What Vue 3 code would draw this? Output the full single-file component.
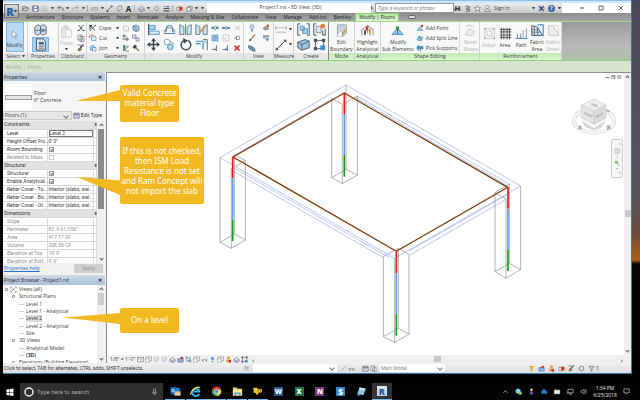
<script setup>
import { ref } from 'vue'

const c = { k: '#4a5058', b: '#3f8fc4', l: '#a9d3ee', g: '#c4c4c4' }
const s = (d, col = c.k, w = 1.6, fill = 'none') =>
  `<path d="${d}" fill="${fill}" stroke="${col}" stroke-width="${w}" stroke-linejoin="round"/>`
const f = (d, col) => `<path d="${d}" fill="${col}"/>`

const icons = {
  open: s('M1 13V3h5l1 2h6v3M1 13l3-6h11l-3 6z', '#666'),
  save: s('M2 2h11l1 1v11H2z', '#446', 1.6, '#8b9dba') + f('M5 2h6v5H5zM4 9h8v5H4z', '#e8eef5'),
  sync: s('M13 5A6 6 0 1 0 14 9M8 5v4h4', '#aaa'),
  undo: s('M6 2L2 6l4 4M2 6h8q5 0 4 7', '#4a4f58', 1.8),
  redo: s('M10 2l4 4-4 4M14 6H6Q1 6 2 13', '#999', 1.8),
  ruler: s('M1 6h14v5H1zM4 6v2M8 6v3M12 6v2', '#999'),
  line: s('M2 14L14 2', '#555', 1.6) + f('M1 12h4v4H1zM11 1h4v4h-4z', '#556'),
  tag: s('M6 14L3 8l3-6h6l2 6-4 4z', '#777'),
  home: s('M2 8l6-5 6 5v5l-6 2-6-2zM2 8l6 3 6-3M8 11v4', '#657', 1.3, '#dde6ef'),
  sect: s('M8 2l5 6-5 6-5-6z', '#777'),
  thin: f('M1 3h14v1H1zM1 7h14v2H1zM1 12h14v3H1z', '#555') + f('M9 2h4v4H9z', c.b),
  closew: s('M2 5h9v8H2z', '#777', 1.4, '#eee') + f('M7 4h8v8H7z', '#d0392b'),
  switchw: s('M2 6h9v8H2zM5 6V3h9v8h-3', '#666', 1.4, '#eee'),
  cursor: s('M4 1v12l3-3 2 5 2-1-2-5h4z', '#6a7680', 1, '#fff'),
  props: s('M3 1h8l3 3v11H3z', '#555', 1.2, '#dfe8f2') + f('M6 5h6v3H6z', '#2f5f94') + s('M6 10h6M6 12.500h6', '#555', 1),
  family: s('M1 5l4-3 3 2v9l-4 2-3-2zM8 4l4-2 3 2v9l-4 2-3-2zM1 9h14', '#667', 1.1, '#cfdbe8') + f('M8 7h5v4H8z', '#7a8ea8'),
  paste: s('M2 3h9v12H2zM5 1h4v3H5z', '#ccc', 1.1, '#e9e9e9') + s('M7 6h7v9H7z', '#ccc', 1, '#fafafa'),
  cut: s('M3 2l9 11M13 2L4 13', '#556', 1.8) + s('M1 13h4M11 13h4', '#556', 2.4),
  copy: s('M2 2h8v10H2zM6 5h8v10H6z', '#667', 1.3, '#fff') + s('M8 9h4M8 12h4', '#667', 1),
  match: s('M13 1L7 8', '#345', 2.4) + f('M3 8l5-1 2 3-4 5-5-2z', '#7d7a48') + s('M1 2h6v4', '#556', 1.4),
  cope: s('M2 2v12M2 4l10 9M5 10l9-8', '#456', 2) + f('M1 2h5v3H1z', '#345'),
  cutg: s('M5 5h9v8H5z', c.b, 1.2, '#d7ebf8') + s('M1 8a5 5 0 0 1 8-5', '#c33', 1.6),
  join: s('M2 7a5 5 0 1 1 8 5H3z', c.b, 1.4, '#a9d3ee') + s('M7 7h7v7H7z', '#568', 1.2, '#eef6fb'),
  box: s('M3 3h6l4 3v8H3z', '#bbb', 1.4, '#f2f2f2'),
  wall: s('M2 4l6-2 6 3v8l-6 2-6-3z', '#567', 1.4, '#9fc9e6') + s('M8 6v9M2 4l6 3', '#567', 1),
  beam: s('M1 4h8M1 10h13M4 1v6M10 7v7', '#567', 2),
  split: s('M1 2h7v6H1zM8 8h6v6H8z', '#678', 1.4, '#dfeefa'),
  paint: f('M2 2h5v12H2z', c.b) + s('M5 12l8-9', '#c89a3c', 2.4) + s('M7 14h7', '#567', 1.4),
  hammer: s('M6 6l8 8', '#875', 2.4) + f('M1 6l5-5 4 4-5 5z', '#445'),
  align: s('M2 1v14', '#556', 1.4) + s('M3 3h7v5H3z', c.b, 1, c.l) + s('M3 10h12v4H3z', c.b, 1, '#d7ebf8'),
  offset: s('M1 13h14M1 9h3q0-6 4-6t4 6h3', c.b, 1.3) + s('M1 11h3V6h8v5h3', '#678', 1),
  mirror: s('M1 2l5 3v9H1zM10 14V5l5-3v12z', '#579', 1.1, '#d0e6f5') + s('M8 1v14', '#4a4', 1.2),
  mirror2: s('M1 2l5 3v9H1zM10 14V5l5-3v12z', '#579', 1.1, '#d0e6f5') + s('M13 3l-7 9', '#c89a3c', 2),
  move: s('M8 2v12M2 8h12', '#3d4650', 1.8) + f('M8 0l3 4H5zM8 16l3-4H5zM0 8l4-3v6zM16 8l-4-3v6z', '#3d4650'),
  copyo: `<circle cx="5" cy="5" r="3.500" fill="#fff" stroke="#789"/><circle cx="9" cy="11" r="3.500" fill="${c.l}" stroke="${c.b}"/>` + s('M9 4l5 4', '#678', 1),
  rotate: s('M6 3a6 6 0 1 0 5 0', '#3d4650', 1.7) + f('M5 0l6 3-5 4z', '#3d4650'),
  trim: s('M1 4h9v10M1 7h6', c.b, 1.5) + s('M10 2h5v13', '#567', 1.2) + f('M10 3h5v3h-5z', c.l),
  sp1: f('M1 5h5v5H1zM10 5h5v5h-5z', c.b) + s('M8 3v10', '#c44', 1.4),
  sp2: f('M0 6h6v4H0zM10 6h6v4h-6z', c.b) + s('M8 4v8', '#357', 1.4),
  array: s('M2 2h5v5H2zM9 2h5v5H9zM2 9h5v5H2zM9 9h5v5H9z', c.b, 1.3, c.l),
  scale: s('M2 2h12v12H2zM2 8h6v6', '#bbb', 1.3),
  pin: s('M2 8h5M7 4v8M7 5h6v6H7z', '#888', 1.4),
  unpin: s('M3 4l9 9M12 3L5 12M10 8h4', '#bbb', 1.4),
  ext: s('M1 11h8M11 2v12', '#567', 1.6) + f('M7 7l4 4-4 3z', c.b),
  del: s('M3 3l10 10M13 3L3 13', '#cf2a2a', 3.2),
  bulb: s('M6 12V9a4 4 0 1 1 4 0v3z', '#579', 1.2, '#bfe0f5') + s('M6 14h4', '#555', 1.6),
  hide: s('M2 9q6-7 12 0-6 6-12 0', '#666', 1.4, '#aaa') + f('M9 1h5v5H9z', '#d46a2c'),
  brush: s('M14 1L7 9', '#b87b3a', 2.4) + f('M2 15l2-6 4 3z', '#444'),
  lw: s('M2 4h12', '#567', 2.4) + s('M2 8h12', '#567', 1.6) + f('M7 10h7l-3 5z', c.b),
  disp: s('M1 3l7 2 6 5v5l-7-2-6-5z', '#567', 1.4, '#79a9cb') + s('M5 4v7M9 6v8', '#345', 1),
  dim: s('M1 5h14M1 2v6M15 2v6', '#aaa', 1.1) + s('M1 11h14', '#c7c7c7', 1.6),
  meas: s('M3 13L13 3', '#445', 1.3) + f('M1 11l4 4H1zM11 1h4v4z', '#445'),
  grp: s('M4 1H1v14h3M12 1h3v14h-3', '#456', 1.2) + s('M4 4h5v5H4zM7 7h6v6H7z', c.b, 1, c.l),
  sim: s('M4 1H1v14h3M12 9v6h3V7', '#456', 1.2) + s('M4 4h6v8H4z', '#789', 1, '#dce9f3') + `<circle cx="12" cy="4" r="3" fill="#e5822b"/>`,
  floor: s('M1 5l9-3 5 2v8l-9 3-5-3z', '#567', 1.2, '#9cc4df') + s('M1 5l5 3 9-4M6 8v7', '#567', 1.2),
  nodes: s('M3 3h10v10H3z', '#667', 1.2) + f('M1 1h4v4H1zM11 1h4v4h-4zM1 11h4v4H1z', '#456') + f('M9 9h6v6H9z', c.b),
  editb: s('M3 1h11v10l-4 4H3z', '#999', 1, '#c5d2de') + s('M13 7l-5 7', '#c89a3c', 2) + f('M6 10h2v5H3z', '#fff'),
  analy: s('M1 7l7-5 7 5v7M1 7v7M5 6v8M11 6v8M8 2v9', '#99a', 1.3) + f('M6 3h3v5H6z', '#d0392b') + f('M4 8h2v5H4z', '#333') + f('M10 6h2v6h-2z', '#e0912f'),
  submod: s('M1 13l7-8 7 8z', c.b, 1, '#8fc4e6') + f('M6 3h4v4H6z', '#38a24a') + s('M8 5v8', '#357', 1),
  addp: s('M2 13l6-8 6 8z', c.b, 1, '#8fc4e6') + f('M10 2h4v4h-4z', '#d0392b'),
  adds: s('M2 12l4-8 8 3-4 7z', c.b, 1.2, '#8fc4e6') + s('M6 4l4 10', '#357', 1),
  picks: s('M2 5h12v5H2z', c.b, 1.2, '#3f8fc4') + s('M4 10v4M9 10v5M5 2v3', '#468', 1.6),
  reset: s('M2 13l4-7 7 3-3 5zM3 3l4-2 5 3', '#c8c8c8', 1.2, '#eee'),
  rebar: s('M2 2h12v12H2zM5 5h6v6H5z', '#c8c8c8', 1.1) + f('M1 1h3v3H1zM12 1h3v3h-3zM12 12h3v3h-3zM1 12h3v3H1z', '#c4c4c4'),
  area: s('M1 3h14M1 6h14M1 10h14M1 13h14M3 1v14M6 1v14M10 1v14M13 1v14', '#555', 1.2),
  path: s('M1 14h13V2M3 8v6M7 8v6M10 4v8', '#89a', 1.2) + s('M1 14h14', c.b, 1.2),
  fabric: s('M1 14V2l7 2 6 10z', '#456', 1.2, '#dceefa') + s('M4 3v11M8 5v9M1 7h8M1 10h11', '#567', 1) + s('M8 1h7v14', c.b, 1.4),
  fsheet: s('M2 14V2h5l8 12z', '#c8c8c8', 1.2, '#eee') + s('M2 2h12v12', '#d5d5d5', 1),
  bino: f('M2 5h4v2h4V5h4l1 8h-5v-3H6v3H1zM3 2h3v3H3zM10 2h3v3h-3z', '#444'),
  key: s('M3 3h9v4H6v3h7v4H4', '#555', 1.8),
  star: s('M8 1l2 5h5l-4 3 2 6-5-4-5 4 2-6-4-3h5z', '#555', 1.2, '#fff'),
  user: s('M8 8a3.500 3.500 0 1 1 .1 0M2 15q0-6 6-6t6 6z', '#555', 1.3, '#eee'),
  xch: s('M3 3l10 10M13 3L3 13', '#2b3f7d', 3) + s('M2 2h12v12H2z', '#99a', 1),
  view: s('M3 2h12v9H3z', '#888', 1.3, '#eee') + s('M1 6h9v8H1z', '#888', 1.3, '#fff'),
  mail: s('M1 3h14v10H1zM1 3l7 6 7-6', '#777', 1.4),
  sun: s('M8 3a5 5 0 1 1-.1 0M3 13l10-9', '#aaa', 1.4),
  crop: s('M4 1v11h11M1 4h11v11', '#577ea8', 1.6) + f('M8 8h4v4H8z', '#4a8fd0'),
  cropr: s('M2 6h12v8H2z', '#3e6fa5', 1.4, '#8fb7dd') + f('M8 2h6v5H8z', '#d33'),
  glass: s('M1 9h5q2-3 4 0h5M3 9q0 4 3 4M10 9q1 4 4 3', '#567', 1.4),
  bulbb: f('M5 2h6v7H5zM6 11h4v3H6z', '#5a9bdc'),
  filt: s('M2 3h12l-5 6v5H7V9z', '#666', 1.4, '#ddd'),
  filty: f('M2 2h12l-4 6v6H6V8z', '#e8a82c'),
  person: f('M5 1h6v6H5zM3 8h10v6H3z', '#e0a03c') + f('M8 9h6v6H8z', '#bb3a2c'),
  gear: `<circle cx="8" cy="8" r="5" fill="none" stroke="#999" stroke-width="2.500"/>`,
  fx: s('M3 3h4v10M9 5h5M11 2v10M1 7h5', '#888', 1.4),
  pen: s('M13 2L5 12l-2 2', '#999', 1.6),
  tbl: s('M2 3h12v11H2zM2 6h12M6 9h5', '#557', 1.6, '#eef'),
}

const quick = ['open', 'save', 'sync', '▾', 'undo', '▾', 'redo', '▾', '|', 'ruler', '▾', 'line', 'tag', 'A', '|', 'home', '▾', 'sect', 'thin', '|', 'closew', 'switchw', '▾', '▾']
const tabs = ['Architecture', 'Structure', 'Systems', 'Insert', 'Annotate', 'Analyze', 'Massing & Site', 'Collaborate', 'View', 'Manage', 'Add-Ins', 'Bentley']
const cuts = [['cope', 'Cope'], ['cutg', 'Cut'], ['join', 'Join']]
const bars = [
  { icon: 'rebar', text: 'Rebar', off: true },
  { icon: 'area', text: 'Area' },
  { icon: 'path', text: 'Path' },
  { icon: 'fabric', text: 'Fabric Area' },
  { icon: 'fsheet', text: 'Fabric Sheet', off: true },
]
const level = ref('Level 2')
const props = [
  { head: 'Constraints' },
  { n: 'Level', v: 'Level 2', edit: true },
  { n: 'Height Offset Fro...', v: "0'  0\"" },
  { n: 'Room Bounding', check: true },
  { n: 'Related to Mass', check: false, off: true },
  { head: 'Structural' },
  { n: 'Structural', check: true },
  { n: 'Enable Analytical...', check: true },
  { n: 'Rebar Cover - To...', v: 'Interior (slabs, wal...' },
  { n: 'Rebar Cover - Bo...', v: 'Interior (slabs, wal...' },
  { n: 'Rebar Cover - Ot...', v: 'Interior (slabs, wal...' },
  { head: 'Dimensions' },
  { n: 'Slope', v: '', off: true },
  { n: 'Perimeter', v: "82'  9 61/256\"", off: true },
  { n: 'Area', v: '417.17 SF', off: true },
  { n: 'Volume', v: '208.59 CF', off: true },
  { n: 'Elevation at Top', v: "10'  0\"", off: true },
  { n: 'Elevation at Bott...', v: "9'  6\"", off: true },
]
const tree = [
  { t: 'Views (all)', d: 0 }, { t: 'Structural Plans', d: 1 }, { t: 'Level 1', d: 2 },
  { t: 'Level 1 - Analytical', d: 2 }, { t: 'Level 2', d: 2, picked: true }, { t: 'Level 2 - Analytical', d: 2 },
  { t: 'Site', d: 2 }, { t: '3D Views', d: 1 }, { t: 'Analytical Model', d: 2 }, { t: '(3D)', d: 2, bold: true },
  { t: 'Elevations (Building Elevation)', d: 1 },
]
const viewIcons = ['mail', 'view', 'sun', 'sun', 'home', 'cropr', 'crop', 'view', 'glass', 'bulbb', 'view', 'person', 'home', 'nodes']
const columns = [
  { lines: 'M365 70V308M442 63V301M408 30V283M397 88V326M365 308l32 18 45-25-34-18zM365 70l32 18 45-25', x: 403, y: [54, 117, 240, 305] },
  { lines: 'M30 248V502M64 280V520M106 257V495M73 240V477M30 502l34 18 42-25-33-18zM73 238l33 19-31 18', x: 68, y: [246, 310, 434, 498] },
  { lines: 'M520 545V785M554 550V802M597 538V778M565 520V760M520 785l34 17 43-24-32-18zM520 545l45-25 32 18', x: 559, y: [529, 594, 716, 782] },
  { lines: 'M855 352V590M888 372V610M932 333V584M898 327V565M855 590l33 20 44-26-34-19zM888 372l-33-20 43-25', x: 894, y: [337, 401, 523, 588] },
]
const tints = ['#f01414', '#5a9ff0', '#12a012']
</script>

<template>
  <div class="desktop">
    <div class="window">
      <header class="title">
        <nav class="quick" aria-label="Quick access">
          <template v-for="(q, i) in quick" :key="i">
            <svg v-if="icons[q]" class="ic" viewBox="0 0 16 16" v-html="icons[q]" />
            <b v-else-if="q === 'A'" class="letter">A</b>
            <i v-else-if="q === '|'" class="bar"></i>
            <span v-else class="caret"></span>
          </template>
        </nav>
        <h1>Project1.rvt - 3D View: (3D)</h1>
        <div class="info">
          <span class="step"></span>
          <input type="text" placeholder="Type a keyword or phrase" aria-label="Search help" />
          <div class="helpers">
            <svg v-for="n in ['bino', 'key', 'star', 'user']" :key="n" class="ic" viewBox="0 0 16 16" v-html="icons[n]" />
            <button class="sign">Sign In</button>
            <span class="caret"></span>
            <svg class="ic" viewBox="0 0 16 16" v-html="icons.xch" />
            <button class="help">?</button>
            <span class="caret"></span>
          </div>
        </div>
        <div class="wctl">
          <button aria-label="Minimize"><svg viewBox="0 0 8 8"><path d="M2 4h4" stroke="#444" /></svg></button>
          <button aria-label="Maximize"><svg viewBox="0 0 8 8"><path d="M2 2h4v4H2z" fill="none" stroke="#444" stroke-width=".8" /></svg></button>
          <button aria-label="Close"><svg viewBox="0 0 8 8"><path d="M2 2l4 4M6 2L2 6" stroke="#444" stroke-width=".8" /></svg></button>
        </div>
        <button class="logo">R<span class="caret"></span></button>
      </header>

      <nav class="tabs">
        <a v-for="t in tabs" :key="t" href="#">{{ t }}</a>
        <a href="#" class="on">Modify | Floors</a>
        <span class="pill"></span>
      </nav>

      <div class="ribbon">
        <section class="grp g-select">
          <div class="body"><button class="big active"><svg viewBox="0 0 16 16" v-html="icons.cursor" />Modify</button></div>
          <h2>Select <span class="caret"></span></h2>
        </section>
        <section class="grp g-props">
          <div class="body stack">
            <svg class="lg" viewBox="0 0 16 16" v-html="icons.family" />
            <span class="hot"><svg class="lg" viewBox="0 0 16 16" v-html="icons.props" /></span>
          </div>
          <h2>Properties</h2>
        </section>
        <section class="grp g-clip">
          <div class="body">
            <button class="big off"><svg viewBox="0 0 16 16" v-html="icons.paste" />Paste<span class="caret"></span></button>
            <div class="minis one"><svg v-for="n in ['cut', 'copy', 'match']" :key="n" viewBox="0 0 16 16" v-html="icons[n]" /></div>
          </div>
          <h2>Clipboard</h2>
        </section>
        <section class="grp g-geo">
          <div class="body">
            <div class="list">
              <button v-for="k in cuts" :key="k[1]"><svg viewBox="0 0 16 16" v-html="icons[k[0]]" /><span>{{ k[1] }}</span><span class="caret"></span></button>
            </div>
            <div class="minis two"><svg v-for="n in ['box', 'wall', 'beam', 'split', 'paint', 'hammer']" :key="n" viewBox="0 0 16 16" v-html="icons[n]" /></div>
          </div>
          <h2>Geometry</h2>
        </section>
        <section class="grp g-mod">
          <div class="body">
            <div class="larges four"><svg v-for="n in ['align', 'offset', 'mirror', 'mirror2', 'move', 'copyo', 'rotate', 'trim']" :key="n" viewBox="0 0 16 16" v-html="icons[n]" /></div>
            <div class="minis three"><svg v-for="(n, i) in ['sp1', 'sp2', 'unpin', 'array', 'scale', 'pin', 'ext', 'ext', 'del']" :key="i" viewBox="0 0 16 16" v-html="icons[n]" /></div>
          </div>
          <h2>Modify</h2>
        </section>
        <section class="grp g-view">
          <div class="body"><div class="minis wide"><svg v-for="n in ['bulb', 'hide', 'brush', 'lw', 'disp']" :key="n" viewBox="0 0 16 16" v-html="icons[n]" /></div></div>
          <h2>View</h2>
        </section>
        <section class="grp g-meas">
          <div class="body"><div class="larges solo">
            <svg viewBox="0 0 16 16" v-html="icons.dim" /><span class="caret"></span>
            <svg viewBox="0 0 16 16" v-html="icons.meas" /><span class="caret"></span>
          </div></div>
          <h2>Measure</h2>
        </section>
        <section class="grp g-create">
          <div class="body"><div class="larges pair"><svg v-for="n in ['grp', 'sim', 'floor', 'nodes']" :key="n" viewBox="0 0 16 16" v-html="icons[n]" /></div></div>
          <h2>Create</h2>
        </section>
        <section class="grp green g-mode">
          <div class="body"><button class="big"><svg viewBox="0 0 16 16" v-html="icons.editb" />Edit<br />Boundary</button></div>
          <h2>Mode</h2>
        </section>
        <section class="grp green g-mode">
          <div class="body"><button class="big"><svg viewBox="0 0 16 16" v-html="icons.analy" />Highlight<br />Analytical</button></div>
          <h2>Analytical</h2>
        </section>
        <section class="grp green g-shape">
          <div class="body">
            <button class="big"><svg viewBox="0 0 16 16" v-html="icons.submod" />Modify<br />Sub Elements</button>
            <div class="list">
              <button><svg viewBox="0 0 16 16" v-html="icons.addp" /><span>Add Point</span></button>
              <button><svg viewBox="0 0 16 16" v-html="icons.adds" /><span>Add Split Line</span></button>
              <button><svg viewBox="0 0 16 16" v-html="icons.picks" /><span>Pick Supports</span></button>
            </div>
            <button class="big off cut"><svg viewBox="0 0 16 16" v-html="icons.reset" />Reset<br />Shape</button>
          </div>
          <h2>Shape Editing</h2>
        </section>
        <section class="grp green g-reinf">
          <div class="body">
            <button v-for="b in bars" :key="b.text" class="big narrow" :class="{ off: b.off }"><svg viewBox="0 0 16 16" v-html="icons[b.icon]" />{{ b.text }}</button>
          </div>
          <h2>Reinforcement</h2>
        </section>
        <div class="rest"></div>
      </div>
      <div class="strip">Modify | Floors</div>

      <main class="main">
        <aside class="side">
          <div class="phead"><span>Properties</span><button aria-label="Close properties">✕</button></div>
          <div class="kind">
            <span class="thumb"><i></i></span>
            <p>Floor<br />6" Concrete</p>
          </div>
          <div class="pick">
            <label class="sel"><select aria-label="Element filter"><option>Floors (1)</option></select></label>
            <button><svg class="ic" viewBox="0 0 16 16" v-html="icons.tbl" />Edit Type</button>
          </div>
          <div class="scroller grow">
            <div class="clip">
              <table>
                <colgroup><col class="c1" /><col class="c2" /><col class="c3" /></colgroup>
                <tbody>
                  <tr v-for="(p, i) in props" :key="i" :class="{ head: p.head, off: p.off }">
                    <template v-if="p.head"><th colspan="2">{{ p.head }}</th><th class="pinh">⇞</th></template>
                    <template v-else>
                      <td>{{ p.n }}</td>
                      <td>
                        <input v-if="p.edit" v-model="level" type="text" :aria-label="p.n" />
                        <input v-else-if="p.check !== undefined" type="checkbox" :checked="p.check" :disabled="p.off" :aria-label="p.n" />
                        <template v-else>{{ p.v }}</template>
                      </td>
                      <td></td>
                    </template>
                  </tr>
                </tbody>
              </table>
            </div>
            <div class="vbar"><span class="up"></span><i class="t1"></i><span class="down"></span></div>
          </div>
          <div class="foot"><a href="#">Properties help</a><button disabled>Apply</button></div>
          <div class="phead second"><span>Project Browser - Project1.rvt</span><button aria-label="Close browser">✕</button></div>
          <div class="scroller browser">
            <ul>
              <li v-for="n in tree" :key="n.t" :class="['d' + n.d, { picked: n.picked, bold: n.bold }]">
                <i v-if="n.d < 2" class="exp"></i><i v-else class="dash"></i>
                <svg v-if="n.d === 0" class="ic" viewBox="0 0 16 16"><path d="M2 5V2h3M11 2h3v3M14 11v3h-3M5 14H2v-3M5 5l6 6M11 5l-6 6" fill="none" stroke="#666" stroke-width="1.500" /></svg>
                <span>{{ n.t }}</span>
              </li>
            </ul>
            <div class="vbar"><span class="up"></span><i class="t2"></i><span class="down"></span></div>
          </div>
        </aside>

        <section class="viewport">
          <div class="stage">
            <svg class="model" viewBox="-309 -6 1551 840" preserveAspectRatio="xMinYMin meet" aria-label="3D slab model">
              <g fill="none" stroke="#a9bdf0" stroke-width="2.500">
                <path d="M408 30L932 333L554 550L30 248Z" />
                <path d="M442 63L898 327M436 67L890 330M75 240L365 72M64 285L520 548M70 278L540 549M600 540L888 373M597 528L890 360" />
              </g>
              <path v-for="k in columns" :key="k.x" :d="k.lines" fill="none" stroke="#8c8c8c" stroke-width="2" />
              <path d="M403 54L893 337L559 529L69 246Z" fill="none" stroke="#83400e" stroke-width="4" />
              <g v-for="k in columns" :key="'c' + k.x">
                <path v-for="(t, i) in tints" :key="t" :d="`M${k.x} ${k.y[i]}V${k.y[i + 1]}`" :stroke="t" stroke-width="5" />
              </g>
            </svg>
            <div class="mdi"><svg viewBox="0 0 51 12"><path d="M1 8h12" stroke="#666" stroke-width="3" /><path d="M20 4h8v7h-8zM22 4V1h8v7h-2" fill="none" stroke="#666" stroke-width="2" /><path d="M38 2h10v9H38zM40 4l6 5M46 4l-6 5" fill="none" stroke="#666" stroke-width="1.500" /></svg></div>
            <svg class="cube" viewBox="0 0 132 114">
              <ellipse cx="66" cy="68" rx="60" ry="36" fill="none" stroke="#d4d4d4" stroke-width="12" />
              <ellipse cx="66" cy="68" rx="60" ry="36" fill="none" stroke="#f5f5f5" stroke-width="9" />
              <path d="M20 84l8 10M28 84l-8 10M104 84l12 8M112 82l-6 14M104 36l8 6" stroke="#aaa" stroke-width="5" />
              <path d="M28 66l38 24 36-24-14 24-22 6-26-8z" fill="#bbb" opacity=".6" />
              <path d="M66 2l36 19-36 19-38-19z" fill="#eee" stroke="#b4b4b4" />
              <path d="M28 21l38 19v40L28 60z" fill="#e4e4e4" stroke="#b4b4b4" />
              <path d="M102 21L66 40v40l36-20z" fill="#dcdcdc" stroke="#b4b4b4" />
              <g font-family="Open Sans, sans-serif" font-size="10" font-weight="700" fill="#999" text-anchor="middle">
                <text transform="translate(66 25) rotate(15)">TOP</text>
                <text font-size="8" transform="translate(47 53) rotate(28)">FRONT</text>
                <text font-size="8" transform="translate(84 54) rotate(-28)">RIGHT</text>
              </g>
            </svg>
            <div class="wheel">
              <svg viewBox="0 0 36 117">
                <circle cx="28" cy="6" r="3.500" fill="none" stroke="#aaa" stroke-width="1.500" />
                <circle cx="18" cy="32" r="11" fill="#e6eaee" stroke="#b5bcc2" stroke-width="2" />
                <circle cx="18" cy="32" r="5" fill="#fff" stroke="#b5bcc2" stroke-width="2" />
                <path d="M10 24l16 16M26 24L10 40" stroke="#b5bcc2" />
                <path d="M15 51h6l-3 3zM15 93h6l-3 3z" fill="#777" />
                <path d="M3 58h30" stroke="#ccc" />
                <path d="M10 67h11v10H10z" fill="#86bb78" /><path d="M18 74l8 10" stroke="#888" stroke-width="3" />
                <circle cx="28" cy="110" r="3.500" fill="none" stroke="#aaa" stroke-width="1.500" />
              </svg>
            </div>
            <div class="vbar stagebar"><span class="up"></span><i class="t3"></i><span class="down"></span></div>
          </div>
          <div class="vctl">
            <span class="scale">1/8" = 1'-0"</span>
            <svg v-for="(n, i) in viewIcons" :key="i" class="ic" viewBox="0 0 16 16" v-html="icons[n]" />
            <span class="lt">‹</span>
            <i class="hthumb"></i>
            <span class="rt">›</span>
          </div>
        </section>
      </main>

      <footer class="status">
        <span class="msg">Click to select, TAB for alternates, CTRL adds, SHIFT unselects.</span>
        <svg class="ic" viewBox="0 0 16 16" v-html="icons.fx" />
        <label class="sel ws"><select aria-label="Workset"><option></option></select></label>
        <svg class="ic" viewBox="0 0 16 16" v-html="icons.pen" />
        <svg class="ic" viewBox="0 0 16 16" v-html="icons.glass" />
        <svg class="ic gap" viewBox="0 0 16 16" v-html="icons.tbl" />
        <svg class="ic" viewBox="0 0 16 16" v-html="icons.copy" />
        <label class="sel opt"><select aria-label="Design option"><option>Main Model</option></select></label>
        <div class="filters">
          <svg v-for="(n, i) in ['filty', 'cropr', 'person', 'closew', 'match', 'gear', 'filt']" :key="i" class="ic" viewBox="0 0 16 16" v-html="icons[n]" /><span>:1</span>
        </div>
      </footer>

      <div class="callout one"><i></i>Valid Concrete<br />material type<br />Floor</div>
      <div class="callout two"><i></i>If this is not checked,<br />then ISM Load<br />Resistance is not set<br />and Ram Concept will<br />not import the slab</div>
      <div class="callout three"><i></i>On a level</div>
    </div>

    <footer class="taskbar">
      <button class="start" aria-label="Start"><svg viewBox="0 0 16 16"><path d="M1 3l6-1v6H1zM8 2l7-1v7H8zM1 9h6v6l-6-1zM8 9h7v7l-7-1z" fill="#fff" /></svg></button>
      <div class="search">
        <svg class="ring" viewBox="0 0 20 20"><circle cx="10" cy="10" r="8" fill="none" stroke="#eee" stroke-width="3" /></svg>
        <input type="text" placeholder="Type here to search" aria-label="Type here to search" />
        <svg class="mic" viewBox="0 0 16 16"><path d="M6 1h4v8H6zM3 7q0 5 5 5t5-5M8 12v4" fill="none" stroke="#bbb" stroke-width="1.400" /></svg>
      </div>
      <div class="apps">
        <button class="open" aria-label="Outlook"><svg viewBox="0 0 24 24"><path d="M8 4h13v12H8z" fill="#1e88d8" /><path d="M1 3l13-2v19L1 18z" fill="#0a64b4" /><circle cx="7" cy="10" r="3" fill="none" stroke="#fff" stroke-width="2" /><path d="M10 12h13v9H10z" fill="#f4d9a4" /><path d="M10 12l6 5 7-5" fill="none" stroke="#d0902c" stroke-width="1.500" /></svg></button>
        <button class="open" aria-label="Browser"><svg viewBox="0 0 24 24"><path d="M20 17a8 8 0 1 1 .5-5H8" fill="none" stroke="#35b4ec" stroke-width="4" /><path d="M2 19Q0 14 8 7t14-3" fill="none" stroke="#f1cf4b" stroke-width="2.500" /></svg></button>
        <button class="open" aria-label="Chrome"><svg viewBox="0 0 24 24"><circle cx="12" cy="12" r="10" fill="#4aae50" /><path d="M3 7a10 10 0 0 1 18.500 1H12l-5 5z" fill="#e23b2e" /><path d="M21.500 8A10 10 0 0 1 12 22l4-9-2-5z" fill="#f7cd33" /><circle cx="12" cy="12" r="4.500" fill="#3f7fe8" stroke="#fff" stroke-width="1.500" /></svg></button>
        <button class="open" aria-label="File Explorer"><svg viewBox="0 0 24 24"><path d="M2 3h8l2 3h10v15H2z" fill="#f2d577" /><path d="M2 9h20v11H2z" fill="#fbe9a5" /><path d="M5 20v-6h14v6h-4v-3H9v3z" fill="#3c9fe0" /></svg></button>
        <button class="open" aria-label="Viewer"><svg viewBox="0 0 24 24"><path d="M2 5l8-2 4 4 6-1q4 4 0 8l-6 2-3 4-3-5-5-1 1-4z" fill="#f2c629" /><circle cx="16" cy="11" r="4" fill="#8a6d14" /><circle cx="16" cy="11" r="2" fill="#ffe680" /></svg></button>
        <button class="office w" aria-label="Word">W</button>
        <button class="office x" aria-label="Excel">X</button>
        <button class="office n" aria-label="OneNote">N</button>
        <button class="office snag" aria-label="Snagit">S</button>
        <button aria-label="Notes"><svg viewBox="0 0 24 24"><path d="M8 3l13 3-5 14-13-3z" fill="#8ccbe0" /><path d="M8 3l13 3-1 4-13-3z" fill="#d6eef5" /><path d="M3 17l7 1-1 4-7-2z" fill="#3e8ba8" /></svg></button>
        <button class="office rv" aria-label="Revit">R</button>
      </div>
      <div class="tray">
        <svg viewBox="0 0 16 16"><path d="M3 11l5-5 5 5" fill="none" stroke="#ddd" stroke-width="1.500" /></svg>
        <svg viewBox="0 0 16 16"><circle cx="7" cy="7" r="6" fill="#3cb4e8" /><path d="M4 7q3-5 6 0t-6 2" fill="none" stroke="#fff" stroke-width="2" /><circle cx="12" cy="12" r="4" fill="#8ac449" /></svg>
        <svg viewBox="0 0 16 16"><circle cx="8" cy="4" r="3" fill="#f4c778" /><path d="M4 8h8v7H4z" fill="#3450b4" /><path d="M7 8h2v5H7z" fill="#e23b2e" /></svg>
        <svg viewBox="0 0 16 16"><path d="M3 13a3 3 0 0 1 0-6 4 4 0 0 1 8-1 4 4 0 0 1 2 7z" fill="#1480dc" /></svg>
        <svg viewBox="0 0 16 16"><path d="M1 5h12v8H1zM4 2v3" fill="#eee" stroke="#eee" stroke-width="1.500" /></svg>
        <svg viewBox="0 0 16 16"><path d="M2 3h12v8H2zM8 11v3M5 14h6M2 8v6" fill="none" stroke="#ddd" stroke-width="1.400" /></svg>
        <svg viewBox="0 0 16 16"><path d="M2 6h3l4-4v12l-4-4H2zM11 5q2 3 0 6M13 3q3 5 0 10" fill="none" stroke="#ccc" stroke-width="1.300" /></svg>
        <time>1:34 PM<br />6/25/2018</time>
        <svg class="note" viewBox="0 0 16 16"><path d="M2 2h12v9H9l-2 3v-3H2z" fill="none" stroke="#ddd" stroke-width="1.400" /></svg>
      </div>
    </footer>
  </div>
</template>

<style>
html, body { background: #000; }
</style>

<style scoped>
* { box-sizing: border-box; margin: 0; }
.desktop {
  min-height: 100vh; display: flex; flex-direction: column; gap: 10px;
  font: 5px/7px "Open Sans", "Noto Sans", sans-serif; color: #3a3a3a;
  background: linear-gradient(#494759 0, #565164 38%, #5b535a 50%, #6a4c3a 58%, #b25c18 65%, #050505 66%, #000 100%) right top / 10px 100% no-repeat, #000;
}
button { font: inherit; color: inherit; border: 0; padding: 0; background: none; }
input, select { font: inherit; color: inherit; border: 0; padding: 0; min-width: 0; outline: 0; }
a { color: inherit; text-decoration: none; }
h1, h2 { font: inherit; }
svg { display: block; flex: none; }
.ic { width: 7px; height: 7px; }
.caret { border: 1px solid transparent; border-top: 2px solid #444; width: 3px; height: 2px; flex: none; display: inline-block; vertical-align: middle; }

.window { position: relative; margin: 0 8px 0 3px; flex: 1; display: flex; flex-direction: column; background: #fff; box-shadow: 0 1px #2e7dad; border-right: 1px solid #2e7dad; }
.title { position: relative; height: 13px; border-top: 1px solid #8ec2ec; background: linear-gradient(#cfe5f8 0 2px, #fff 2px); display: flex; align-items: stretch; padding: 2px 0 0 16px; }
.quick { flex: 0 0 188px; display: flex; align-items: center; justify-content: space-between; padding: 0 3px; background: linear-gradient(#ececec, #c9c9c9); }
.letter { font-size: 8px; color: #222; }
.bar { width: 1px; height: 7px; background: #aaa; }
.title h1 { flex: 1; text-align: center; padding-left: 3px; line-height: 9px; }
.info { flex: 0 0 191px; display: flex; align-items: center; background: linear-gradient(#ececec, #c9c9c9); }
.step { border: 2px solid transparent; border-left-color: #555; width: 3px; height: 4px; }
.info input { flex: 0 0 79px; height: 10px; border: 1px solid #999; background: #fff; font-style: italic; padding: 0 2px; }
.info input::placeholder { color: #777; }
.helpers { flex: 1; display: flex; align-items: center; gap: 3px; padding-right: 1px; }
.sign { flex: 1; text-align: left; }
.help { width: 7px; height: 7px; border-radius: 50%; background: #3c6cae; color: #fff; font-weight: 700; line-height: 7px; text-align: center; }
.wctl { flex: 0 0 69px; display: flex; justify-content: space-around; align-items: center; padding-left: 10px; }
.wctl svg { width: 8px; height: 8px; }
.logo { position: absolute; left: 1px; top: 3px; width: 15px; height: 14px; z-index: 2; display: flex; align-items: center; justify-content: center; background: linear-gradient(#dcdcdc, #a5a5a5); border: 1px solid #777; font-size: 11px; font-weight: 800; color: #1d62a8; }

.tabs { height: 8px; background: linear-gradient(#8d8d8d, #a5a5a5); display: flex; gap: 7px; padding-left: 23px; line-height: 8px; white-space: nowrap; color: #222; }
.tabs .on { background: linear-gradient(#b8e6a6, #e2f4da); margin-left: -3px; padding: 0 3px; border: 1px solid #8bd06f; border-bottom: 0; line-height: 7px; }
.pill { width: 8px; height: 4px; border-radius: 2px; background: #ddd; border: 1px solid #666; align-self: center; margin-left: 2px; }

.ribbon { height: 40px; display: flex; border-bottom: 1px solid #8fd273; border-top: 1px solid #a5d98f; padding-left: 1px; }
.grp { flex: none; display: flex; flex-direction: column; border-right: 1px solid #d2d2d2; background: #f8f8f8; min-width: 0; }
.grp h2 { height: 7px; background: #e6e6e6; text-align: center; white-space: nowrap; }
.grp.green h2 { background: linear-gradient(#c2ebb2, #dcf4d2); }
.body { flex: 1; display: flex; min-height: 0; justify-content: center; }
.g-select { width: 24px; } .g-props { width: 31px; } .g-clip { width: 28px; } .g-geo { width: 58px; }
.g-mod { width: 99px; } .g-view { width: 30px; } .g-meas { width: 20px; } .g-create { width: 35px; border-right-color: #888; }
.g-mode { width: 26px; } .g-shape { width: 99px; } .g-reinf { width: 82px; }
.rest { flex: 1; background: linear-gradient(#9a9a9a, #b9b9b9 60%, #aebfa8); }
.big { display: block; line-height: 7px; text-align: center; padding-top: 1px; flex: none; white-space: nowrap; }
.big svg { width: 13px; height: 13px; margin: 0 auto 2px; }
.big .caret { display: block; margin: 1px auto 0; }
.active { width: 18px; margin: 0 2px 1px 0; background: #b7d9f5; border: 1px solid #7fb3e0; }
.active svg { width: 9px; height: 9px; margin: 3px auto 3px; }
.off { color: #b5b5b5; }
.stack { flex-direction: column; align-items: center; gap: 1px; justify-content: flex-start; padding: 1px 6px 0 0; }
.lg { width: 13px; height: 13px; }
.hot { background: #a9d0f2; border: 1px solid #7fb3e0; padding: 0 1px; }
.minis { display: grid; align-items: center; justify-items: center; grid-auto-rows: 10px; padding-top: 1px; }
.minis svg { width: 8px; height: 8px; }
.minis.one { margin-left: 4px; }
.minis.two { grid-template-columns: 10px 10px; margin-left: 2px; padding-right: 1px; }
.minis.three { grid-template-columns: 11px 11px 11px; }
.minis.wide { grid-template-columns: 14px 14px; }
.list { display: grid; grid-auto-rows: 10px; padding-top: 1px; }
.list button { display: flex; align-items: center; gap: 2px; white-space: nowrap; text-align: left; }
.list svg { width: 8px; height: 8px; }
.g-geo .list button span:nth-child(2) { flex: 0 0 15px; }
.larges { display: grid; grid-auto-rows: 15px; align-items: center; justify-items: center; }
.larges svg { width: 13px; height: 13px; }
.four { grid-template-columns: repeat(4, 16px); }
.pair { grid-template-columns: 16px 16px; }
.solo { grid-template-columns: 13px 5px; }
.solo svg { width: 12px; height: 12px; }
.g-shape .body { gap: 2px; }
.g-shape .cut { border-left: 1px solid #ddd; padding-left: 3px; }
.g-reinf .body { justify-content: space-between; padding: 0 1px; }
.narrow { width: 16px; white-space: normal; flex: none; }
.strip { height: 11px; background: #d5e3cf; color: #a3ada0; padding-left: 3px; line-height: 12px; }

.main { flex: 1; display: flex; min-height: 0; background: #f0f0f0; }
.side { flex: 0 0 102px; display: flex; flex-direction: column; min-height: 0; }
.phead { height: 9px; flex: none; display: flex; justify-content: space-between; align-items: center; padding: 0 3px 0 1px; background: linear-gradient(#c7d5e6, #adc1d9); border-top: 1px solid #d9d9d9; font-family: Roboto, sans-serif; }
.phead button { font-weight: 700; color: #111; line-height: 7px; }
.kind { height: 30px; display: flex; align-items: center; background: #f5f5f5; padding: 2px 0 0 2px; gap: 2px; }
.thumb { width: 27px; height: 26px; background: #fff; display: flex; align-items: center; }
.thumb i { width: 100%; height: 5px; border: 1px solid #999; background: #e5e5e5; }
.pick { height: 10px; display: flex; justify-content: space-between; padding: 0 3px 1px 0; white-space: nowrap; }
.pick button { display: flex; align-items: center; gap: 1px; color: #111; }
.sel { position: relative; display: flex; }
.sel select { appearance: none; width: 100%; background: transparent; padding-left: 1px; }
.sel::after { content: ""; position: absolute; right: 3px; top: 2px; width: 3px; height: 3px; border: solid #777; border-width: 0 1px 1px 0; transform: rotate(45deg); pointer-events: none; }
.pick .sel { flex: 0 0 69px; background: #e7e7e7; border: 1px solid #ccc; }
.scroller { display: flex; min-height: 0; overflow: hidden; }
.grow { flex: 1 1 0; font-family: Roboto, sans-serif; }
.clip { flex: 1; overflow: hidden; background: #fff; }
table { width: 100%; table-layout: fixed; border-collapse: collapse; }
.c1 { width: 44px; } .c3 { width: 3px; }
td, th { height: 8px; line-height: 7px; padding: 0; border: 0 solid #d8d8d8; border-width: 0 1px 1px 0; text-align: left; white-space: nowrap; font-weight: 400; }
td:first-child { padding-left: 4px; }
td:nth-child(2) { padding-left: 1px; }
th { background: #e2e2e2; padding-left: 1px; }
.pinh { padding: 0; font-weight: 700; font-size: 4px; }
td input[type=text] { width: 100%; height: 7px; display: block; border: 1px solid #777; background: #fff; line-height: 5px; }
input[type=checkbox] { appearance: none; width: 5px; height: 5px; border: 1px solid #999; display: block; position: relative; background: #fff; }
input[type=checkbox]:checked::before { content: ""; position: absolute; left: 1px; top: 0; width: 1px; height: 2px; border: solid #777; border-width: 0 1px 1px 0; transform: rotate(40deg); }
input[type=checkbox]:disabled { border-color: #ccc; }
tr.off { color: #8f8f8f; }
.vbar { flex: 0 0 8px; background: #f0f0f0; display: flex; flex-direction: column; align-items: center; }
.up, .down { width: 3px; height: 3px; border: solid #555; border-width: 1px 0 0 1px; transform: rotate(45deg); margin: 3px 0 2px; flex: none; }
.down { transform: rotate(225deg); margin: auto 0 3px; }
.t1 { width: 6px; height: 56%; background: #8b8b8b; }
.t2 { width: 6px; height: 12px; background: #cdcdcd; }
.t3 { width: 6px; height: 7px; background: #c9c9c9; margin-top: 129px; }
.foot { height: 12px; flex: none; display: flex; justify-content: space-between; align-items: center; padding: 0 2px 1px 1px; }
.foot a { color: #1f6fc4; text-decoration: underline; }
.foot button { width: 29px; height: 9px; background: #cfcfcf; color: #8d8d8d; }
.second { height: 10px; }
.browser { height: 78px; flex: none; }
.browser ul { flex: 1; list-style: none; padding: 1px 0 0; background: #fff; display: grid; grid-auto-rows: 9.5%; align-content: start; white-space: nowrap; overflow: hidden; }
li { display: flex; align-items: center; gap: 2px; padding-left: 2px; }
li.d1 { padding-left: 9px; } li.d2 { padding-left: 16px; }
.exp { width: 3px; height: 3px; border: 1px solid #aaa; flex: none; }
.d1 .exp { margin-right: 2px; }
.dash { width: 5px; height: 1px; background: #d0d0d0; flex: none; }
.picked span { background: #dcdcdc; }
.bold { font-weight: 700; }

.viewport { flex: 1; min-width: 0; margin-left: 1px; border-left: 1px solid #8e8e8e; border-top: 1px solid #8e8e8e; display: flex; flex-direction: column; }
.stage { flex: 1; min-height: 0; position: relative; background: #fff; padding-right: 7px; }
.model { width: 100%; height: auto; }
.stagebar { position: absolute; right: 0; top: 0; bottom: 0; width: 7px; }
.mdi { position: absolute; right: 9px; top: 2px; }
.mdi svg { width: 17px; height: 4px; }
.cube { position: absolute; right: 15px; top: 25px; width: 44px; height: 38px; }
.wheel { position: absolute; right: 8px; top: 66px; width: 12px; height: 39px; border: 1px solid #ccc; border-radius: 2px; background: #f7f7f7; }
.wheel svg { width: 100%; height: 100%; }
.vctl { height: 8px; flex: none; display: flex; align-items: center; gap: 1px; background: #f0f0f0; padding: 0 8px 0 3px; }
.vctl .scale { flex: 0 0 26px; white-space: nowrap; }
.lt, .rt { font-size: 8px; line-height: 7px; }
.lt { margin-left: 3px; }
.hthumb { width: 7px; height: 6px; background: #c9c9c9; margin: 0 auto 0 179px; }

.status { height: 10px; flex: none; display: flex; align-items: center; gap: 1px; background: linear-gradient(#f2f2f2, #dcdcdf); padding: 0 1px; white-space: nowrap; font-family: Roboto, sans-serif; }
.msg { flex: 0 0 238px; }
.status .sel { height: 8px; background: #fff; margin: 0 2px; }
.ws { flex: 0 0 84px; }
.opt { flex: 0 0 65px; color: #888; }
.gap { margin-left: 6px; }
.filters { display: flex; gap: 3px; align-items: center; margin-left: auto; margin-right: 31px; }
.filters span { margin-left: -3px; }

.callout { position: absolute; display: block; background: #f3b920; border-radius: 2px; color: #fff; font: 8px/10px "Noto Sans", "Open Sans", sans-serif; text-align: center; white-space: nowrap; }
.callout i { position: absolute; right: 100%; background: #f3b920; clip-path: polygon(100% 0, 0 100%, 100% 100%); }
.callout.one { left: 117px; top: 85px; width: 59px; padding: 3px 0 4px; }
.callout.one i { width: 44px; height: 11px; top: 5px; }
.callout.two { left: 117px; top: 137px; width: 84px; padding: 9px 0 8px; }
.callout.two i { width: 43px; height: 18px; top: 40px; clip-path: polygon(0 0, 100% 20%, 100% 100%); }
.callout.three { left: 117px; top: 308px; width: 59px; padding: 7px 0 8px; }
.callout.three i { width: 57px; height: 11px; top: 5px; clip-path: polygon(100% 0, 0 40%, 100% 100%); }

.taskbar { height: 17px; flex: none; display: flex; align-items: stretch; background: #040404; padding: 0 10px 0 0; }
.start { flex: 0 0 20px; }
.start svg { width: 8px; height: 8px; margin: 0 auto; }
.search { flex: 0 0 143px; background: #303030; display: flex; align-items: center; gap: 3px; padding: 0 5px 0 4px; }
.ring { width: 10px; height: 10px; }
.search input { flex: 1; background: none; font: 6px Roboto, sans-serif; color: #b5b5b5; }
.search input::placeholder { color: #aaa; }
.mic { width: 7px; height: 8px; }
.apps { flex: 0 0 227px; display: flex; justify-content: space-between; margin-left: 2px; }
.apps button { width: 20px; display: grid; place-items: center; }
.apps button svg { width: 11px; height: 11px; }
.apps .open { border-bottom: 1px solid #76b9ed; }
.apps .office { font-weight: 800; font-size: 7px; color: #fff; background: center / 9px 9px no-repeat; }
.apps .w { background-image: linear-gradient(#2b579a, #2b579a); }
.apps .x { background-image: linear-gradient(#217346, #217346); }
.apps .n { background-image: linear-gradient(#80397b, #80397b); }
.apps .snag { background-image: linear-gradient(#2f86c8, #2f86c8); font-size: 9px; }
.apps .rv { background: linear-gradient(#dfe6ee, #c9d4e2) center / 10px 10px no-repeat, #333; color: #1d5c9e; font-size: 9px; border-bottom: 1px solid #76b9ed; }
.tray { margin-left: auto; display: flex; align-items: center; gap: 6px; }
.tray svg { width: 7px; height: 7px; }
.tray time { color: #eee; text-align: center; width: 24px; white-space: nowrap; }
</style>
